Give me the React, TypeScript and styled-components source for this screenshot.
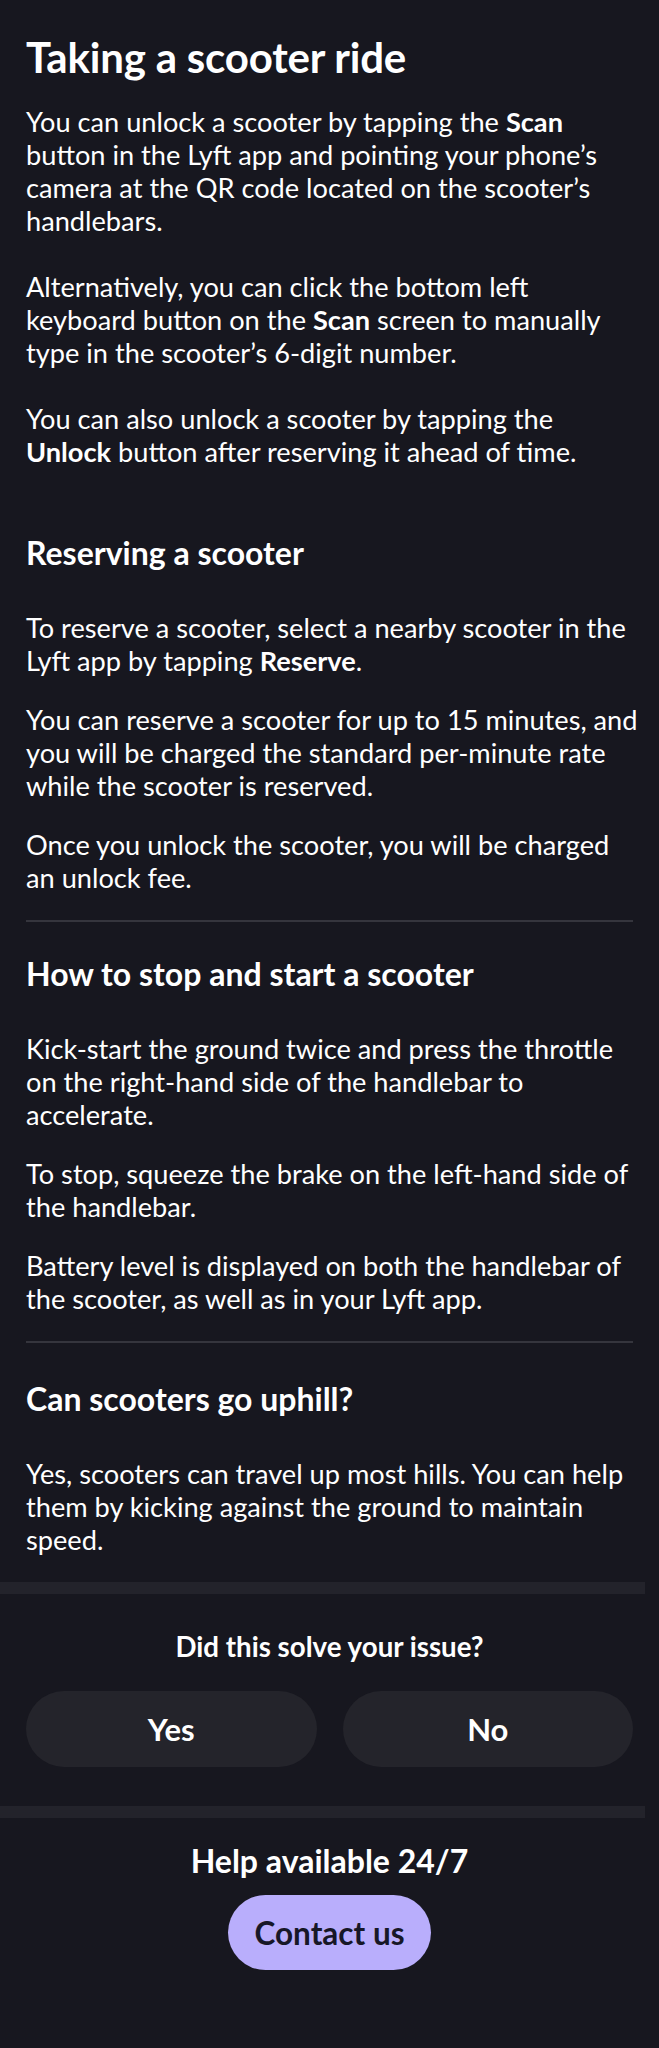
import styled, { createGlobalStyle } from 'styled-components';

const GlobalStyle = createGlobalStyle`
  html, body {
    margin: 0;
    padding: 0;
    background: #17171f;
  }

  body {
    font-family: 'Lato', 'Noto Sans', sans-serif;
    color: #ffffff;
    -webkit-font-smoothing: antialiased;
  }
`;

const Page = styled.main`
  width: 659px;
  min-height: 2048px;
  background: #17171f;
  display: flex;
  flex-direction: column;
`;

const Article = styled.article`
  padding: 32px 26px 0;
  display: flex;
  flex-direction: column;
`;

const Title = styled.h1`
  margin: 0 0 23px;
  font-size: 42px;
  line-height: 50px;
  font-weight: 700;
  letter-spacing: -0.2px;
`;

const Section = styled.section<{ $top: number }>`
  padding-top: ${(props) => props.$top}px;
  display: flex;
  flex-direction: column;
  gap: 26px;
`;

const Heading = styled.h2`
  margin: 0 0 13px;
  font-size: 32px;
  line-height: 38px;
  font-weight: 700;
`;

// lines are broken where the app breaks them
const Text = styled.p`
  margin: 0;
  font-size: 27.2px;
  line-height: 33px;
  font-weight: 400;
  white-space: nowrap;

  b {
    font-weight: 700;
  }
`;

const Divider = styled.hr`
  margin: 26px 0 0;
  border: none;
  height: 2px;
  background: #35353d;
`;

const Band = styled.div<{ $gap?: number }>`
  width: 645px;
  height: 12px;
  margin-top: ${(props) => props.$gap ?? 0}px;
  background: #23232b;
`;

const Feedback = styled.section`
  padding: 37px 26px 39px;
  display: flex;
  flex-direction: column;
  align-items: center;
  gap: 28px;
`;

const Question = styled.h3`
  margin: 0;
  font-size: 27.7px;
  line-height: 32px;
  font-weight: 700;
`;

const Choices = styled.div`
  width: 100%;
  display: grid;
  grid-template-columns: 1fr 1fr;
  gap: 26px;
`;

const Choice = styled.button`
  height: 76px;
  border: none;
  border-radius: 38px;
  background: #24242b;
  color: #ffffff;
  font-family: inherit;
  font-size: 31px;
  font-weight: 700;
  cursor: pointer;
`;

const Help = styled.section`
  padding: 24px 26px 0;
  display: flex;
  flex-direction: column;
  align-items: center;
  gap: 15px;
`;

const HelpTitle = styled.h3`
  margin: 0;
  font-size: 32px;
  line-height: 38px;
  font-weight: 700;
`;

const ContactButton = styled.button`
  width: 203px;
  height: 75px;
  border: none;
  border-radius: 38px;
  background: #b9aefc;
  color: #171727;
  font-family: inherit;
  font-size: 31.5px;
  font-weight: 700;
  cursor: pointer;
`;

export default function App() {
  return (
    <Page>
      <GlobalStyle />
      <Article>
        <Title>Taking a scooter ride</Title>
        <Text>
          You can unlock a scooter by tapping the <b>Scan</b>
          <br />
          button in the Lyft app and pointing your phone’s
          <br />
          camera at the QR code located on the scooter’s
          <br />
          handlebars.
          <br />
          <br />
          Alternatively, you can click the bottom left
          <br />
          keyboard button on the <b>Scan</b> screen to manually
          <br />
          type in the scooter’s 6-digit number.
          <br />
          <br />
          You can also unlock a scooter by tapping the
          <br />
          <b>Unlock</b> button after reserving it ahead of time.
        </Text>

        <Section $top={66}>
          <Heading>Reserving a scooter</Heading>
          <Text>
            To reserve a scooter, select a nearby scooter in the
            <br />
            Lyft app by tapping <b>Reserve</b>.
          </Text>
          <Text>
            You can reserve a scooter for up to 15 minutes, and
            <br />
            you will be charged the standard per-minute rate
            <br />
            while the scooter is reserved.
          </Text>
          <Text>
            Once you unlock the scooter, you will be charged
            <br />
            an unlock fee.
          </Text>
        </Section>
        <Divider />

        <Section $top={33}>
          <Heading>How to stop and start a scooter</Heading>
          <Text>
            Kick-start the ground twice and press the throttle
            <br />
            on the right-hand side of the handlebar to
            <br />
            accelerate.
          </Text>
          <Text>
            To stop, squeeze the brake on the left-hand side of
            <br />
            the handlebar.
          </Text>
          <Text>
            Battery level is displayed on both the handlebar of
            <br />
            the scooter, as well as in your Lyft app.
          </Text>
        </Section>
        <Divider />

        <Section $top={37}>
          <Heading>Can scooters go uphill?</Heading>
          <Text>
            Yes, scooters can travel up most hills. You can help
            <br />
            them by kicking against the ground to maintain
            <br />
            speed.
          </Text>
        </Section>
      </Article>

      <Band $gap={26} />
      <Feedback>
        <Question>Did this solve your issue?</Question>
        <Choices>
          <Choice>Yes</Choice>
          <Choice>No</Choice>
        </Choices>
      </Feedback>
      <Band />
      <Help>
        <HelpTitle>Help available 24/7</HelpTitle>
        <ContactButton>Contact us</ContactButton>
      </Help>
    </Page>
  );
}
